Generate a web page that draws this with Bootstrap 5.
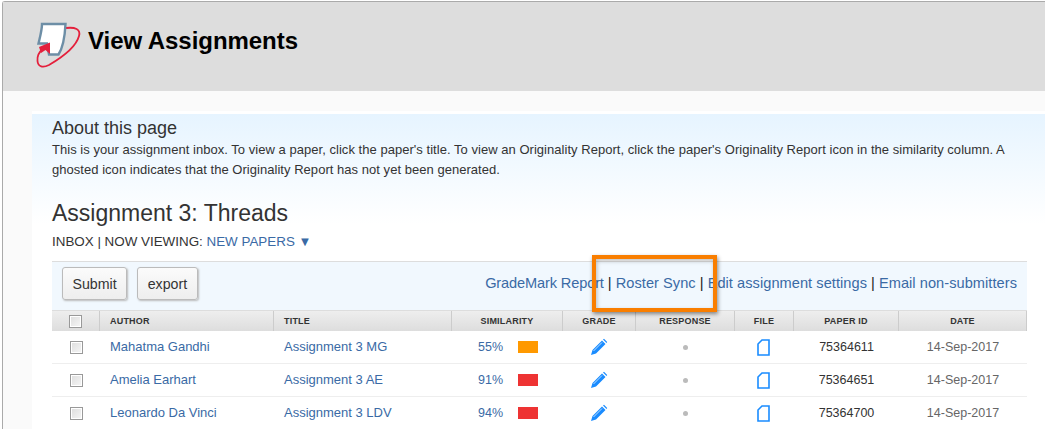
<!DOCTYPE html>
<html lang="en">
<head>
<meta charset="utf-8">
<title>View Assignments</title>
<link rel="stylesheet" href="https://cdn.jsdelivr.net/npm/bootstrap@5.3.0/dist/css/bootstrap.min.css">
<style>
html,body{height:429px;overflow:hidden}
body{background:#fff;font-family:"Liberation Sans",Arial,sans-serif;color:#333;position:relative}
.frame{margin:1px 0 0 2px;border-top:1px solid #aaa;border-left:1px solid #aaa;border-top-left-radius:3px;background:#fafafa;height:428px}
.pagehead{background:#ddd;height:89px;padding:0 0 0 31px;gap:5px}
.pagehead h1{font-size:24px;font-weight:700;color:#000;margin:0 0 12px;line-height:28px;letter-spacing:-.05px}
.logo{margin:0 0 4px 0}
.inbox{margin:20px 0 0 29px;border-top:3px solid #fff;background:linear-gradient(#e6f4ff,#fff 110px);padding:4px 0 0 20px;height:320px}
.about-title{font-size:18px;line-height:20px;margin:0;font-weight:400;color:#333}
.about-text{font-size:13px;letter-spacing:.035px;line-height:20px;margin:2px 0 0;color:#333;width:975px}
.assign-title{font-size:23px;line-height:28px;font-weight:400;margin:19px 0 0;color:#333}
.viewing{font-size:13.400px;line-height:18px;margin:6px 0 0;color:#333}
.viewing a,.linkset a,.inbox-table a{color:#3a6aa5;text-decoration:none}
.caret-mark{font-size:13px;line-height:1;color:#3a6aa5;margin-left:0}
.wrap-table{width:975px}
.toolbar{height:50px;margin-top:10px;background:#f1f8fe;border-top:1px solid #ddd;border-bottom:1px solid #ddd;padding:5px 10px 0}
.tool-btn{font-size:14.200px;line-height:20px;height:33px;padding:5px 9.500px;color:#333;background:linear-gradient(#fbfbfb,#eee);border:1px solid #bbb;border-radius:3px;box-shadow:1px 1px 2px #bbb}
.btn-gap{gap:10px}
.linkset{font-size:14.600px;line-height:33px;color:#222}
.linkset a{letter-spacing:.05px}
.linkset a.lead-link{letter-spacing:-.14px}
.inbox-table{width:975px;table-layout:fixed;font-size:12.500px;margin:0;--bs-table-bg:transparent;border-collapse:separate;border-spacing:0}
.inbox-table th{height:20px;padding:0;font-size:9px;font-weight:700;line-height:20px;color:#333;background:linear-gradient(#eee,#ddd);border:0;border-right:1px solid #ccc;text-align:center;letter-spacing:.2px}
.inbox-table th.lefty{text-align:left;padding-left:10px}
.inbox-table td{height:33px;padding:0;vertical-align:middle;border:0;border-bottom:1px solid #eee;color:#333;text-align:center;background:#fff}
.inbox-table td.lefty{text-align:left;padding-left:10px;font-size:13px}
.inbox-table td.when{color:#666}
.tick{display:inline-block;width:13px;height:13px;border:1px solid #999;background:linear-gradient(135deg,#ddd,#f6f6f6);vertical-align:middle;box-shadow:inset 0 0 0 1px #fff}
.sim-cell{display:flex;align-items:center;justify-content:flex-start;padding-left:26px;gap:15px}
.sim-bar{width:20px;height:12px;display:block}
.sim-orange{background:#ff9900}
.sim-red{background:#ee3333}
.dot{display:inline-block;width:5px;height:5px;border-radius:50%;background:#bbb;vertical-align:middle}
.pen{margin-left:-2px}
.callout{position:absolute;left:592px;top:255px;width:125px;height:57px;border:4px solid #f97e00;box-shadow:1px 2px 4px rgba(0,0,0,.45),inset 1px 2px 4px rgba(0,0,0,.25);pointer-events:none}
</style>
</head>
<body>
<div class="frame">
  <div class="pagehead d-flex align-items-center">
    <svg class="logo" width="49" height="50" viewBox="33 20 49 50" aria-hidden="true">
      <path d="M65 28 C74 27 80 29 78 36 C75 47 60 58 48 65 C42 68 37 67 36.500 61 C36 56 38 52 42 49" fill="none" stroke="#e4203c" stroke-width="1.800"/>
      <path d="M41 24 H64.500 C64 34 63 46 57.500 54.500 H48 L46 43.500 H37.500 C39 37 41 30 41 24 Z" fill="#fff" stroke="#6d8ea6" stroke-width="2.400"/>
      <path d="M38 47 L49 42.500 V54 L44.500 50 L40 53 Z" fill="#e4203c"/>
    </svg>
    <h1>View Assignments</h1>
  </div>
  <div class="inbox">
    <h2 class="about-title">About this page</h2>
    <p class="about-text">This is your assignment inbox. To view a paper, click the paper's title. To view an Originality Report, click the paper's Originality Report icon in the similarity column. A ghosted icon indicates that the Originality Report has not yet been generated.</p>
    <h3 class="assign-title">Assignment 3: Threads</h3>
    <p class="viewing">INBOX | NOW VIEWING: <a href="#">NEW PAPERS</a> <span class="caret-mark">▼</span></p>
    <div class="wrap-table">
      <div class="toolbar d-flex align-items-start justify-content-between">
        <div class="d-flex btn-gap">
          <button type="button" class="btn tool-btn">Submit</button>
          <button type="button" class="btn tool-btn">export</button>
        </div>
        <div class="linkset"><a class="lead-link" href="#">GradeMark Report</a> | <a href="#">Roster Sync</a> | <a href="#">Edit assignment settings</a> | <a href="#">Email non-submitters</a></div>
      </div>
      <table class="table inbox-table">
        <colgroup><col style="width:48px"><col style="width:174px"><col style="width:178px"><col style="width:111px"><col style="width:73px"><col style="width:99px"><col style="width:59px"><col style="width:105px"><col style="width:128px"></colgroup>
        <thead><tr><th><span class="tick"></span></th><th class="lefty">AUTHOR</th><th class="lefty">TITLE</th><th>SIMILARITY</th><th>GRADE</th><th>RESPONSE</th><th>FILE</th><th>PAPER ID</th><th>DATE</th></tr></thead>
        <tbody>
          <tr><td><span class="tick"></span></td><td class="lefty"><a href="#">Mahatma Gandhi</a></td><td class="lefty"><a href="#">Assignment 3 MG</a></td><td><div class="sim-cell"><a href="#">55%</a><span class="sim-bar sim-orange"></span></div></td><td><svg class="pen" width="18" height="18" viewBox="0 0 18 18"><path d="M1 17 L2.500 12 L12 2.500 L15.500 6 L6 15.500 Z M13 1.500 L14 .8 L17.200 4 L16.500 5 Z" fill="#1a8cff"/><path d="M3.500 13 L12 4.500" stroke="#fff" stroke-width=".7"/></svg></td><td><span class="dot"></span></td><td><svg class="pen" width="13" height="17" viewBox="0 0 13 17"><path d="M5 1 H12 V16 H1 V5 Z" fill="#fff" stroke="#1a8cff" stroke-width="1.600"/></svg></td><td>75364611</td><td class="when">14-Sep-2017</td></tr>
          <tr><td><span class="tick"></span></td><td class="lefty"><a href="#">Amelia Earhart</a></td><td class="lefty"><a href="#">Assignment 3 AE</a></td><td><div class="sim-cell"><a href="#">91%</a><span class="sim-bar sim-red"></span></div></td><td><svg class="pen" width="18" height="18" viewBox="0 0 18 18"><path d="M1 17 L2.500 12 L12 2.500 L15.500 6 L6 15.500 Z M13 1.500 L14 .8 L17.200 4 L16.500 5 Z" fill="#1a8cff"/><path d="M3.500 13 L12 4.500" stroke="#fff" stroke-width=".7"/></svg></td><td><span class="dot"></span></td><td><svg class="pen" width="13" height="17" viewBox="0 0 13 17"><path d="M5 1 H12 V16 H1 V5 Z" fill="#fff" stroke="#1a8cff" stroke-width="1.600"/></svg></td><td>75364651</td><td class="when">14-Sep-2017</td></tr>
          <tr><td><span class="tick"></span></td><td class="lefty"><a href="#">Leonardo Da Vinci</a></td><td class="lefty"><a href="#">Assignment 3 LDV</a></td><td><div class="sim-cell"><a href="#">94%</a><span class="sim-bar sim-red"></span></div></td><td><svg class="pen" width="18" height="18" viewBox="0 0 18 18"><path d="M1 17 L2.500 12 L12 2.500 L15.500 6 L6 15.500 Z M13 1.500 L14 .8 L17.200 4 L16.500 5 Z" fill="#1a8cff"/><path d="M3.500 13 L12 4.500" stroke="#fff" stroke-width=".7"/></svg></td><td><span class="dot"></span></td><td><svg class="pen" width="13" height="17" viewBox="0 0 13 17"><path d="M5 1 H12 V16 H1 V5 Z" fill="#fff" stroke="#1a8cff" stroke-width="1.600"/></svg></td><td>75364700</td><td class="when">14-Sep-2017</td></tr>
        </tbody>
      </table>
    </div>
  </div>
</div>
<div class="callout"></div>
</body>
</html>
